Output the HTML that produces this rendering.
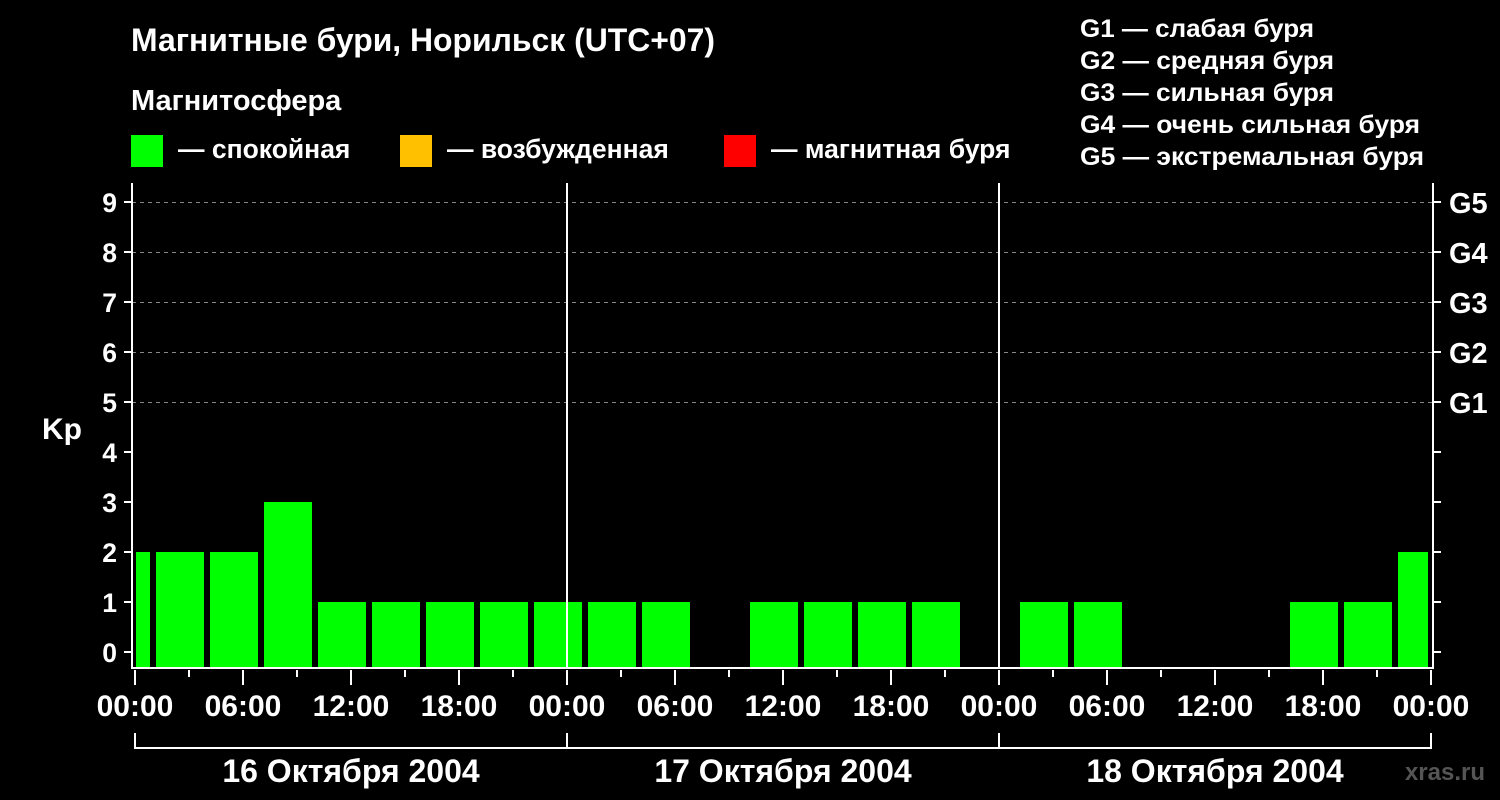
<!DOCTYPE html>
<html><head><meta charset="utf-8"><style>
html,body{margin:0;padding:0;background:#000;width:1500px;height:800px;overflow:hidden}
svg{display:block}
text{font-family:"Liberation Sans",Arial,sans-serif;font-weight:bold;fill:#fff}
</style></head><body>
<svg width="1500" height="800" viewBox="0 0 1500 800" xmlns="http://www.w3.org/2000/svg">
<rect width="1500" height="800" fill="#000"/>
<text x="131" y="51" font-size="32" textLength="584" lengthAdjust="spacingAndGlyphs">Магнитные бури, Норильск (UTC+07)</text>
<text x="131" y="110" font-size="29">Магнитосфера</text>
<rect x="131" y="135" width="32" height="32" fill="#00ff00"/>
<text x="178" y="158" font-size="26.5">— спокойная</text>
<rect x="400" y="135" width="32" height="32" fill="#ffc000"/>
<text x="447" y="158" font-size="26.5">— возбужденная</text>
<rect x="724" y="135" width="32" height="32" fill="#ff0000"/>
<text x="771" y="158" font-size="26.5">— магнитная буря</text>
<g font-size="25">
<text x="1080" y="37" textLength="234" lengthAdjust="spacingAndGlyphs">G1 — слабая буря</text>
<text x="1080" y="69" textLength="254" lengthAdjust="spacingAndGlyphs">G2 — средняя буря</text>
<text x="1080" y="101" textLength="254" lengthAdjust="spacingAndGlyphs">G3 — сильная буря</text>
<text x="1080" y="133" textLength="340" lengthAdjust="spacingAndGlyphs">G4 — очень сильная буря</text>
<text x="1080" y="165" textLength="344" lengthAdjust="spacingAndGlyphs">G5 — экстремальная буря</text>
</g>
<g stroke="#888" stroke-width="1" stroke-dasharray="4,4">
<line x1="132" y1="202.5" x2="1432" y2="202.5"/>
<line x1="132" y1="252.5" x2="1432" y2="252.5"/>
<line x1="132" y1="302.5" x2="1432" y2="302.5"/>
<line x1="132" y1="352.5" x2="1432" y2="352.5"/>
<line x1="132" y1="402.5" x2="1432" y2="402.5"/>
</g>
<g fill="#00ff00">
<rect x="136" y="552" width="14" height="116"/>
<rect x="156" y="552" width="48" height="116"/>
<rect x="210" y="552" width="48" height="116"/>
<rect x="264" y="502" width="48" height="166"/>
<rect x="318" y="602" width="48" height="66"/>
<rect x="372" y="602" width="48" height="66"/>
<rect x="426" y="602" width="48" height="66"/>
<rect x="480" y="602" width="48" height="66"/>
<rect x="534" y="602" width="48" height="66"/>
<rect x="588" y="602" width="48" height="66"/>
<rect x="642" y="602" width="48" height="66"/>
<rect x="750" y="602" width="48" height="66"/>
<rect x="804" y="602" width="48" height="66"/>
<rect x="858" y="602" width="48" height="66"/>
<rect x="912" y="602" width="48" height="66"/>
<rect x="1020" y="602" width="48" height="66"/>
<rect x="1074" y="602" width="48" height="66"/>
<rect x="1290" y="602" width="48" height="66"/>
<rect x="1344" y="602" width="48" height="66"/>
<rect x="1398" y="552" width="30" height="116"/>
</g>
<g stroke="#fff" stroke-width="2" fill="none">
<polyline points="132,183 132,668 1433,668 1433,183"/>
<line x1="567" y1="183" x2="567" y2="668"/>
<line x1="999" y1="183" x2="999" y2="668"/>
<line x1="124" y1="652" x2="132" y2="652"/><line x1="124" y1="602" x2="132" y2="602"/>
<line x1="124" y1="552" x2="132" y2="552"/><line x1="124" y1="502" x2="132" y2="502"/>
<line x1="124" y1="452" x2="132" y2="452"/><line x1="124" y1="402" x2="132" y2="402"/>
<line x1="124" y1="352" x2="132" y2="352"/><line x1="124" y1="302" x2="132" y2="302"/>
<line x1="124" y1="252" x2="132" y2="252"/><line x1="124" y1="202" x2="132" y2="202"/>
<line x1="1433" y1="652" x2="1441" y2="652"/><line x1="1433" y1="602" x2="1441" y2="602"/>
<line x1="1433" y1="552" x2="1441" y2="552"/><line x1="1433" y1="502" x2="1441" y2="502"/>
<line x1="1433" y1="452" x2="1441" y2="452"/><line x1="1433" y1="402" x2="1441" y2="402"/>
<line x1="1433" y1="352" x2="1441" y2="352"/><line x1="1433" y1="302" x2="1441" y2="302"/>
<line x1="1433" y1="252" x2="1441" y2="252"/><line x1="1433" y1="202" x2="1441" y2="202"/>
<path d="M135,670V685M189,670V677M243,670V685M297,670V677M351,670V685M405,670V677M459,670V685M513,670V677M567,670V685M621,670V677M675,670V685M729,670V677M783,670V685M837,670V677M891,670V685M945,670V677M999,670V685M1053,670V677M1107,670V685M1161,670V677M1215,670V685M1269,670V677M1323,670V685M1377,670V677M1431,670V685"/>
<path d="M135,733V748H1431V733M567,733V748M999,733V748"/>
</g>
<g font-size="26.5" text-anchor="end">
<text x="117" y="662">0</text><text x="117" y="612">1</text><text x="117" y="562">2</text>
<text x="117" y="512">3</text><text x="117" y="462">4</text><text x="117" y="412">5</text>
<text x="117" y="362">6</text><text x="117" y="312">7</text><text x="117" y="262">8</text>
<text x="117" y="212">9</text>
</g>
<text x="42" y="439" font-size="30">Kp</text>
<g font-size="29">
<text x="1449" y="413">G1</text><text x="1449" y="363">G2</text><text x="1449" y="313">G3</text>
<text x="1449" y="263">G4</text><text x="1449" y="213">G5</text>
</g>
<g font-size="30" text-anchor="middle">
<text x="135" y="716">00:00</text><text x="243" y="716">06:00</text><text x="351" y="716">12:00</text><text x="459" y="716">18:00</text>
<text x="567" y="716">00:00</text><text x="675" y="716">06:00</text><text x="783" y="716">12:00</text><text x="891" y="716">18:00</text>
<text x="999" y="716">00:00</text><text x="1107" y="716">06:00</text><text x="1215" y="716">12:00</text><text x="1323" y="716">18:00</text>
<text x="1431" y="716">00:00</text>
</g>
<g font-size="32" text-anchor="middle">
<text x="351" y="782">16 Октября 2004</text>
<text x="783" y="782">17 Октября 2004</text>
<text x="1215" y="782">18 Октября 2004</text>
</g>
<text x="1485" y="780" font-size="24" text-anchor="end" style="fill:#555">xras.ru</text>
</svg>
</body></html>
